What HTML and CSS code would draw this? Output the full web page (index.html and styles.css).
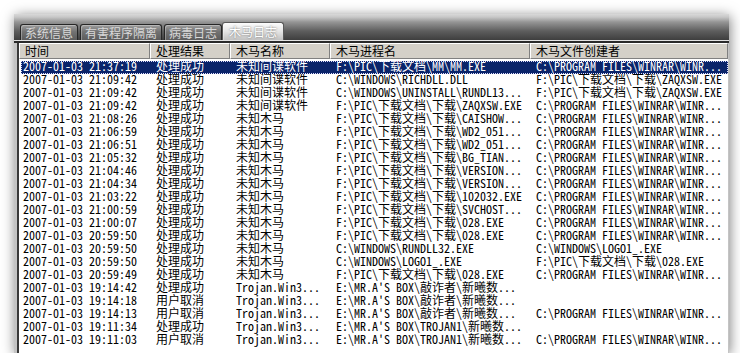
FILE: index.html
```html
<!DOCTYPE html>
<html>
<head>
<meta charset="utf-8">
<link rel="stylesheet" href="styles.css">
</head>
<body>
<div class="window">
  <div class="chrome">
    <div class="tabs">
      <div class="tab">系统信息</div>
      <div class="tab">有害程序隔离</div>
      <div class="tab">病毒日志</div>
      <div class="tab active">木马日志</div>
    </div>
  </div>
  <div class="pane">
    <div class="head">
      <span>时间</span><span>处理结果</span><span>木马名称</span><span>木马进程名</span><span>木马文件创建者</span>
    </div>
    <div class="rows">
      <div class="row sel"><span>2007-01-03 21:37:19</span><span>处理成功</span><span>未知间谍软件</span><span>F:\PIC\下载文档\MM\MM.EXE</span><span>C:\PROGRAM FILES\WINRAR\WINR...</span></div>
      <div class="row"><span>2007-01-03 21:09:42</span><span>处理成功</span><span>未知间谍软件</span><span>C:\WINDOWS\RICHDLL.DLL</span><span>F:\PIC\下载文档\下载\ZAQXSW.EXE</span></div>
      <div class="row"><span>2007-01-03 21:09:42</span><span>处理成功</span><span>未知间谍软件</span><span>C:\WINDOWS\UNINSTALL\RUNDL13...</span><span>F:\PIC\下载文档\下载\ZAQXSW.EXE</span></div>
      <div class="row"><span>2007-01-03 21:09:42</span><span>处理成功</span><span>未知间谍软件</span><span>F:\PIC\下载文档\下载\ZAQXSW.EXE</span><span>C:\PROGRAM FILES\WINRAR\WINR...</span></div>
      <div class="row"><span>2007-01-03 21:08:26</span><span>处理成功</span><span>未知木马</span><span>F:\PIC\下载文档\下载\CAISHOW...</span><span>C:\PROGRAM FILES\WINRAR\WINR...</span></div>
      <div class="row"><span>2007-01-03 21:06:59</span><span>处理成功</span><span>未知木马</span><span>F:\PIC\下载文档\下载\WD2_051...</span><span>C:\PROGRAM FILES\WINRAR\WINR...</span></div>
      <div class="row"><span>2007-01-03 21:06:51</span><span>处理成功</span><span>未知木马</span><span>F:\PIC\下载文档\下载\WD2_051...</span><span>C:\PROGRAM FILES\WINRAR\WINR...</span></div>
      <div class="row"><span>2007-01-03 21:05:32</span><span>处理成功</span><span>未知木马</span><span>F:\PIC\下载文档\下载\BG_TIAN...</span><span>C:\PROGRAM FILES\WINRAR\WINR...</span></div>
      <div class="row"><span>2007-01-03 21:04:46</span><span>处理成功</span><span>未知木马</span><span>F:\PIC\下载文档\下载\VERSION...</span><span>C:\PROGRAM FILES\WINRAR\WINR...</span></div>
      <div class="row"><span>2007-01-03 21:04:34</span><span>处理成功</span><span>未知木马</span><span>F:\PIC\下载文档\下载\VERSION...</span><span>C:\PROGRAM FILES\WINRAR\WINR...</span></div>
      <div class="row"><span>2007-01-03 21:03:22</span><span>处理成功</span><span>未知木马</span><span>F:\PIC\下载文档\下载\102032.EXE</span><span>C:\PROGRAM FILES\WINRAR\WINR...</span></div>
      <div class="row"><span>2007-01-03 21:00:59</span><span>处理成功</span><span>未知木马</span><span>F:\PIC\下载文档\下载\SVCHOST...</span><span>C:\PROGRAM FILES\WINRAR\WINR...</span></div>
      <div class="row"><span>2007-01-03 21:00:07</span><span>处理成功</span><span>未知木马</span><span>F:\PIC\下载文档\下载\028.EXE</span><span>C:\PROGRAM FILES\WINRAR\WINR...</span></div>
      <div class="row"><span>2007-01-03 20:59:50</span><span>处理成功</span><span>未知木马</span><span>F:\PIC\下载文档\下载\028.EXE</span><span>C:\PROGRAM FILES\WINRAR\WINR...</span></div>
      <div class="row"><span>2007-01-03 20:59:50</span><span>处理成功</span><span>未知木马</span><span>C:\WINDOWS\RUNDLL32.EXE</span><span>C:\WINDOWS\LOGO1_.EXE</span></div>
      <div class="row"><span>2007-01-03 20:59:50</span><span>处理成功</span><span>未知木马</span><span>C:\WINDOWS\LOGO1_.EXE</span><span>F:\PIC\下载文档\下载\028.EXE</span></div>
      <div class="row"><span>2007-01-03 20:59:49</span><span>处理成功</span><span>未知木马</span><span>F:\PIC\下载文档\下载\028.EXE</span><span>C:\PROGRAM FILES\WINRAR\WINR...</span></div>
      <div class="row"><span>2007-01-03 19:14:42</span><span>处理成功</span><span>Trojan.Win3...</span><span>E:\MR.A'S BOX\敲诈者\新曦数...</span><span></span></div>
      <div class="row"><span>2007-01-03 19:14:18</span><span>用户取消</span><span>Trojan.Win3...</span><span>E:\MR.A'S BOX\敲诈者\新曦数...</span><span></span></div>
      <div class="row"><span>2007-01-03 19:14:13</span><span>用户取消</span><span>Trojan.Win3...</span><span>E:\MR.A'S BOX\敲诈者\新曦数...</span><span>C:\PROGRAM FILES\WINRAR\WINR...</span></div>
      <div class="row"><span>2007-01-03 19:11:34</span><span>处理成功</span><span>Trojan.Win3...</span><span>E:\MR.A'S BOX\TROJAN1\新曦数...</span><span></span></div>
      <div class="row"><span>2007-01-03 19:11:03</span><span>用户取消</span><span>Trojan.Win3...</span><span>E:\MR.A'S BOX\TROJAN1\新曦数...</span><span>C:\PROGRAM FILES\WINRAR\WINR...</span></div>
    </div>
  </div>
</div>
</body>
</html>
```

FILE: styles.css
```css
body {
  margin: 0;
  background: #fff;
  font-family: "Noto Sans Mono CJK SC", "Liberation Mono", monospace;
}

.window {
  margin: 14px 0 0 14px;
  width: 715px;
  height: 339px;
  background: #c4c4c4;
  display: flex;
  flex-direction: column;
  box-shadow: 1px 2px 12px rgba(0, 0, 0, 0.5);
}

.chrome {
  flex: none;
  height: 29px;
  box-sizing: border-box;
  padding: 0 0 3px 6px;
  display: flex;
  align-items: flex-end;
  background: linear-gradient(#d8d8d8 0, #c8c8c8 3px, #959595 8px, #5e5e5e 17px, #3e3e3e 26px, #e2e2e2 26px, #e2e2e2 27px, #2a2a2a 27px);
}

.tabs {
  display: flex;
  align-items: flex-end;
  gap: 2px;
}

.tab {
  height: 16px;
  box-sizing: border-box;
  padding: 0 4px;
  font: 12px/15px "Noto Sans CJK SC", sans-serif;
  color: #d8d8d8;
  background: linear-gradient(#9c9c9c, #727272 45%, #5c5c5c);
  border: 1px solid #262626;
  border-bottom: 0;
  border-radius: 3px 3px 0 0;
  box-shadow: inset 1px 1px 0 rgba(255, 255, 255, 0.3);
}

.tab.active {
  height: 18px;
  line-height: 17px;
  padding: 0 6px;
  margin-left: -2px;
  color: #fff;
  text-shadow: 0 0 2px #555;
  background: linear-gradient(#fbfbfb, #e4e4e4 50%, #c2c2c2);
  border-color: #5a5a5a;
}

.pane {
  flex: 1;
  margin: 0 1px 0 3px;
  border-left: 2px solid #3a3a3a;
  background: #fff;
  display: flex;
  flex-direction: column;
}

.head {
  flex: none;
  display: grid;
  grid-template-columns: 131px 80px 100px 200px 1fr;
  height: 16px;
}

.head span {
  box-sizing: border-box;
  background: #d4d0c8;
  border-left: 1px solid #fff;
  border-top: 1px solid #fff;
  border-right: 1px solid #808080;
  border-bottom: 1px solid #808080;
  padding-left: 5px;
  font: 12px/14px "Noto Sans CJK SC", sans-serif;
  color: #000;
  white-space: nowrap;
}

.rows {
  padding-top: 2px;
}

.row {
  display: grid;
  grid-template-columns: 129px 80px 100px 200px 1fr;
  height: 13px;
  margin-left: 2px;
  font-size: 12px;
  color: #000;
}

.row span {
  display: block;
  height: 13px;
  line-height: 10px;
  padding-left: 6px;
  white-space: pre;
}

.row span:first-child {
  padding-left: 2px;
}

.row.sel {
  background: #0a246a;
  color: #fff;
  outline: 1px dotted #dcdcff;
  outline-offset: -1px;
}
```
